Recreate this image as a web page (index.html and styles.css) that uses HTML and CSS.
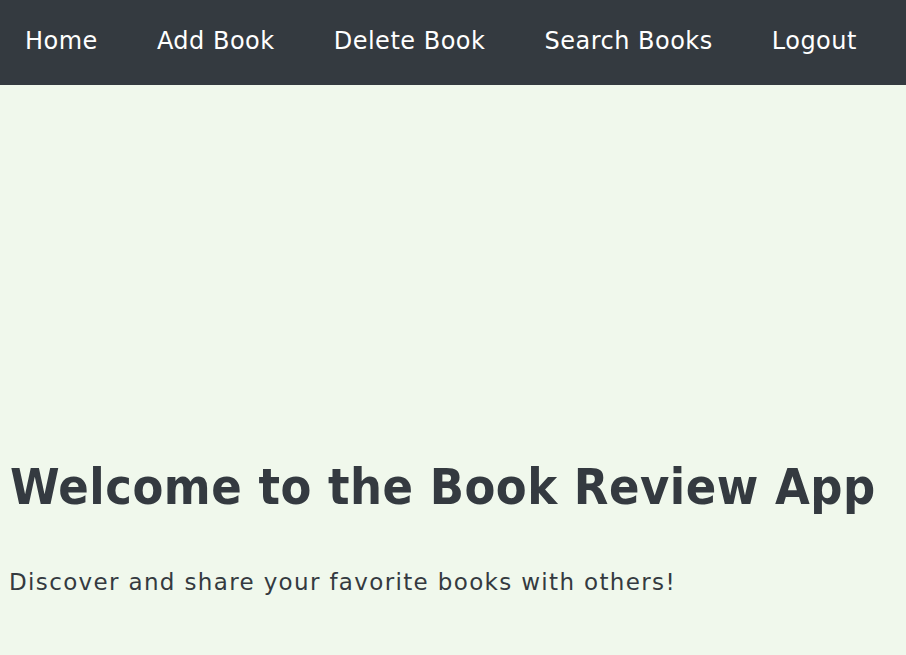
FILE: index.html
```html
<!DOCTYPE html>
<html lang="en">
<head>
<meta charset="utf-8">
<title>Book Review App</title>
<link rel="stylesheet" href="styles.css">
</head>
<body>
<nav class="navbar">
  <a class="nav-link" href="#">Home</a>
  <a class="nav-link" href="#">Add Book</a>
  <a class="nav-link" href="#">Delete Book</a>
  <a class="nav-link" href="#">Search Books</a>
  <a class="nav-link" href="#">Logout</a>
</nav>
<main class="hero">
  <h1 class="title">Welcome to the Book Review App</h1>
  <p class="subtitle">Discover and share your favorite books with others!</p>
</main>
</body>
</html>
```
FILE: styles.css
```css
html, body {
  margin: 0;
  padding: 0;
}
body {
  background: #f0f8ec;
  color: #343a40;
  font-family: "DejaVu Sans", sans-serif;
  height: 655px;
  overflow: hidden;
}
.navbar {
  background: #343a40;
  height: 85px;
  display: flex;
  align-items: center;
  gap: 59px;
  padding: 0 0 4px 25px;
  box-sizing: border-box;
}
.nav-link {
  color: #ffffff;
  text-decoration: none;
  font-size: 24px;
  letter-spacing: 0.5px;
}
.hero {
  padding: 372px 10px 0 10px;
}
.title {
  margin: 0;
  font-size: 50px;
  font-weight: bold;
  font-stretch: condensed;
  letter-spacing: 0.5px;
  line-height: 60px;
  white-space: nowrap;
}
.subtitle {
  margin: 52px 0 0 -1px;
  font-size: 23px;
  letter-spacing: 1.35px;
}
```
